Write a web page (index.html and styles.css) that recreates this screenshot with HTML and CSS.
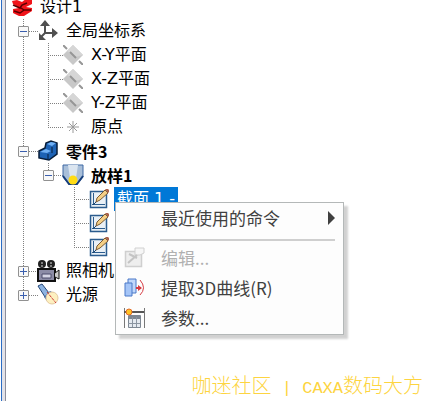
FILE: index.html
```
<!DOCTYPE html>
<html lang="zh-CN">
<head>
    <meta charset="UTF-8">
    <meta name="viewport" content="width=device-width, initial-scale=1.0">
    <title>设计树</title>
    <link rel="stylesheet" href="styles.css">
</head>
<body>
    <!-- Shared icons -->
    <svg class="icon-defs" aria-hidden="true">
        <symbol id="plane" viewBox="0 0 20 20">
            <path d="M10 0L20 10L10 20L0 10Z" fill="#c8c8c8"/>
            <path d="M10 0L20 10L12 12L4 6Z" fill="#d6d6d6"/>
            <path d="M0 0l4 4M7 7l6 6M16 16l4 4" stroke="#969696" stroke-width="2"/>
        </symbol>
        <symbol id="sketch" viewBox="0 0 20 20">
            <path d="M1.5 2.5h16v16h-16z" fill="#e9f0f6" stroke="#2b5c8e" stroke-width="1.5"/>
            <path d="M4.5 4v12M3 15.5h13" fill="none" stroke="#2b5c8e"/>
            <path d="M4 16l4-4" stroke="#1f456b"/>
            <path d="M7 13l1-4L16 1l3 3L11 11z" fill="#f4cf86" stroke="#7b5b35"/>
            <path d="M16 0l2-1 3 3-2 2z" fill="#a9604a"/>
        </symbol>
    </svg>

    <main class="panel">
        <ul class="tree">
            <li class="root">
                <div class="row">
                    <svg class="icon" viewBox="0 0 20 20"><path d="M0 4l5-1 5 2 5-4 5 2v4l-6 3 6 1v3l-8 5H7l-6-3v-4l6-1-6-4z" fill="#f0141a"/><path d="M1 8l7 3 2-3 5-2M2 14l6 2 4-3-3-2M12 13l7 0" fill="none" stroke="#5c0000" stroke-width="1.5"/></svg>
                    <span class="label">设计1</span>
                </div>
                <ul>
                    <li>
                        <div class="row">
                            <button class="toggle minus" aria-label="折叠"></button><i class="dash"></i>
                            <svg class="icon" viewBox="0 0 20 20"><path d="M7 3v9h9M7 12l-5 5" fill="none" stroke="#505050" stroke-width="2"/><path d="M2 5l5-6 5 6zM14 7l6 5-6 5zM1 12v7h7z" fill="#505050"/></svg>
                            <span class="label">全局坐标系</span>
                        </div>
                        <ul>
                            <li><div class="row"><i class="branch"></i><svg class="icon"><use href="#plane"/></svg><span class="label">X-Y平面</span></div></li>
                            <li><div class="row"><i class="branch"></i><svg class="icon"><use href="#plane"/></svg><span class="label">X-Z平面</span></div></li>
                            <li><div class="row"><i class="branch"></i><svg class="icon"><use href="#plane"/></svg><span class="label">Y-Z平面</span></div></li>
                            <li><div class="row"><i class="branch"></i><svg class="icon" viewBox="0 0 20 20"><path d="M10 4v12M4 10h12M6 6l8 8M14 6l-8 8" stroke="#999"/></svg><span class="label">原点</span></div></li>
                        </ul>
                    </li>
                    <li>
                        <div class="row">
                            <button class="toggle minus" aria-label="折叠"></button><i class="dash"></i>
                            <svg class="icon" viewBox="0 0 20 20"><path d="M1 10l6-3 1-5 5-2 6 2v11l-8 6-10-2z" fill="#1d62b4" stroke="#071c38" stroke-width="1.5"/><path d="M2 11l6-3 5 2-4 2zM9 3l4-2 5 1-4 3z" fill="#6fb0f4"/><path d="M10 13v5M14 6v6" stroke="#071c38"/></svg>
                            <span class="label bold">零件3</span>
                        </div>
                        <ul>
                            <li>
                                <div class="row">
                                    <button class="toggle minus" aria-label="折叠"></button><i class="dash"></i>
                                    <svg class="icon" viewBox="0 0 20 20"><path d="M0 0h20v12l-6 7H6l-6-7z" fill="#a9bfd9" stroke="#3e68a4"/><path d="M5 0h10l-2 13H7z" fill="#dbe5f0"/><path d="M0 11l6 8h8l6-8" fill="none" stroke="#173e7a" stroke-width="2"/><circle cx="10" cy="15" r="4.5" fill="#ffdc16"/></svg>
                                    <span class="label bold">放样1</span>
                                </div>
                                <ul>
                                    <li><div class="row"><i class="branch"></i><svg class="icon"><use href="#sketch"/></svg><span class="label selected">截面 1 -</span></div></li>
                                    <li><div class="row"><i class="branch"></i><svg class="icon"><use href="#sketch"/></svg></div></li>
                                    <li><div class="row"><i class="branch"></i><svg class="icon"><use href="#sketch"/></svg></div></li>
                                </ul>
                            </li>
                        </ul>
                    </li>
                    <li>
                        <div class="row">
                            <button class="toggle plus" aria-label="展开"></button><i class="dash"></i>
                            <svg class="icon" viewBox="0 0 20 20"><circle cx="4" cy="3" r="4" fill="#222"/><circle cx="13" cy="3" r="4" fill="#222"/><path d="M3 2h2M12 2h2M3 5h2M12 5h2" stroke="#ddd"/><path d="M0 8h17v12H0z" fill="#8c8ca6" stroke="#111" stroke-width="2"/><path d="M17 12l4-3v9l-4-2" fill="#ccc" stroke="#111"/><path d="M4 13h9v4H4z" fill="#d5d5e5" stroke="#4c4c6c"/></svg>
                            <span class="label">照相机</span>
                        </div>
                    </li>
                    <li>
                        <div class="row">
                            <button class="toggle plus" aria-label="展开"></button><i class="dash"></i>
                            <svg class="icon" viewBox="0 0 20 20"><path d="M0 1l4-2 7 9-4 4z" fill="#8db4e2" stroke="#254778"/><path d="M6 12l6-6 4 2-7 8z" fill="#3b69a8"/><circle cx="14" cy="13" r="6" fill="#fdf0c0" stroke="#e4c9a0"/><path d="M9 7l9 11" stroke="#c33" stroke-dasharray="3 1"/></svg>
                            <span class="label">光源</span>
                        </div>
                    </li>
                </ul>
            </li>
        </ul>

        <div class="menu" role="menu">
            <button class="menu-item" role="menuitem"><span class="menu-icon"></span>最近使用的命令<span class="arrow"></span></button>
            <hr>
            <button class="menu-item" role="menuitem" disabled>
                <svg class="menu-icon" viewBox="0 0 20 20"><path d="M1.5 3.5h16v15h-16z" fill="#eee" stroke="#cfcfcf" stroke-width="1.5"/><path d="M11 0h9v5l-4 2h-5z" fill="#f6f6f6" stroke="#d0d0d0"/><path d="M4 15l9-8M5 6l8 4" stroke="#c4c4c4" stroke-width="2"/></svg>
                编辑...
            </button>
            <button class="menu-item" role="menuitem">
                <svg class="menu-icon" viewBox="0 0 20 20"><path d="M4 1h8v14H4z" fill="#c0d7fb" stroke="#4b78c8"/><path d="M1 5h7v13H1z" fill="#a5c5f7" stroke="#4b78c8"/><path d="M12 10h5" stroke="#d63b43" stroke-width="2"/><path d="M14 7l4 3-4 3z" fill="#d63b43"/><path d="M16 2q7 8 0 15" fill="none" stroke="#d63b43"/></svg>
                提取3D曲线(R)
            </button>
            <button class="menu-item" role="menuitem">
                <svg class="menu-icon" viewBox="0 0 20 20"><path d="M.5 0v20M20.5 0v20" stroke="#777"/><path d="M0 4h20" stroke="#555" stroke-width="2"/><path d="M4.500 7.500h12v12h-12z" fill="#e5eaf0" stroke="#7d8792"/><path d="M4 8h13v3H4z" fill="#7d8792"/><path d="M4 15.500h12M8.500 9v10M12.500 9v10" stroke="#8b95a1"/><circle cx="5" cy="4" r="3" fill="#ffc323" stroke="#e26c2b"/></svg>
                参数...
            </button>
        </div>
        <footer class="watermark">咖迷社区<span class="latin"> | CAXA</span>数码大方</footer>
    </main>
</body>
</html>
```
FILE: styles.css
```
* {
    box-sizing: border-box;
}

body {
    margin: 0;
    background-color: #ffffff;
    color: #000000;
    font-family: 'DejaVu Sans', 'Noto Sans CJK SC', sans-serif;
    font-size: 16px;
}

.icon-defs {
    display: none;
}

/* The window edge: blue frame, grey gutter, dark inner line */
.panel {
    position: relative;
    display: flex;
    flex-direction: column;
    min-height: 100vh;
    padding-left: 6px;
    background: linear-gradient(90deg, #ffffff 1px, #2a6cc4 1px 2px, #e2e2e8 2px 5px, #8c8e9c 5px 6px, #ffffff 6px);
    overflow: hidden;
}

/* Tree */
.tree,
.tree ul {
    list-style: none;
    margin: 0;
    padding: 0;
}

.tree {
    margin-top: -5px;
    padding-left: 6px;
}

.tree ul ul {
    padding-left: 25px;
}

.tree ul ul ul {
    padding-left: 26px;
}

.root > ul {
    padding-left: 5px;
}

.tree ul > li {
    background: repeating-linear-gradient(#808080 0 1px, transparent 1px 2px) 6px 0 / 1px 100% no-repeat;
}

.tree ul > li:last-child {
    background-size: 1px 12px;
}

.row {
    display: flex;
    align-items: center;
    height: 24px;
}

.toggle {
    position: relative;
    flex: none;
    width: 11px;
    height: 11px;
    margin-left: 1px;
    padding: 0;
    border: 1px solid #919191;
    border-radius: 1px;
    background-color: #f8f8f8;
}

.toggle::before,
.plus::after {
    content: "";
    position: absolute;
    left: 1px;
    top: 4px;
    width: 7px;
    height: 1px;
    background-color: #3b5fae;
}

.plus::after {
    left: 4px;
    top: 1px;
    width: 1px;
    height: 7px;
}

.dash,
.branch {
    flex: none;
    width: 9px;
    height: 1px;
    background: repeating-linear-gradient(90deg, #808080 0 1px, transparent 1px 2px);
}

.branch {
    width: 15px;
    margin-left: 6px;
}

.icon {
    flex: none;
    width: 20px;
    height: 20px;
    overflow: visible;
}

.label {
    margin-left: 5px;
    padding: 0 3px;
    line-height: 24px;
    white-space: nowrap;
}

.bold {
    font-family: 'Noto Sans CJK SC', sans-serif;
    font-weight: bold;
}

.selected {
    background-color: #0078d7;
    color: #ffffff;
}

/* Context menu */
.menu {
    position: absolute;
    left: 115px;
    top: 202px;
    width: 229px;
    padding-bottom: 1px;
    border: 1px solid #b4b8b8;
    background-color: #fdfdfd;
    box-shadow: 4px 4px 2px rgba(0, 0, 0, 0.18);
}

.menu-item {
    display: flex;
    align-items: center;
    width: 100%;
    height: 30px;
    padding: 0 8px;
    border: none;
    background: none;
    color: #404040;
    font-family: 'Noto Sans CJK SC', sans-serif;
    font-size: 17px;
    line-height: 24px;
    white-space: nowrap;
}

.menu-item:disabled {
    color: #b0b0b0;
}

.menu-icon {
    flex: none;
    width: 20px;
    height: 20px;
    margin-right: 17px;
    overflow: visible;
}

.arrow {
    margin-left: auto;
    border: 7px solid transparent;
    border-left-color: #404040;
    border-right: none;
}

.menu hr {
    height: 2px;
    margin: 6px 8px 2px 44px;
    border: none;
    background-color: #cfcfcf;
}

.watermark {
    margin-top: auto;
    text-align: right;
    color: #fdd440;
    font-family: 'Noto Sans CJK SC', sans-serif;
    font-size: 20px;
    font-weight: 300;
    line-height: 24px;
    white-space: nowrap;
}

.latin {
    font-family: 'Liberation Mono', monospace;
    font-size: 17px;
}
```
